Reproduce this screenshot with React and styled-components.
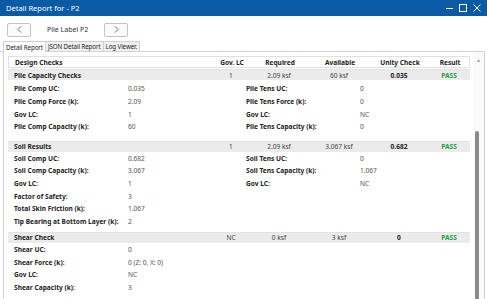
import React from "react";
import styled, { createGlobalStyle } from "styled-components";

const Global = createGlobalStyle`
  html, body { margin: 0; padding: 0; background: #fff; }
  body { font-family: "Noto Sans", "Open Sans", sans-serif; }
  * { box-sizing: border-box; }
`;

const Window = styled.div`
  width: 487px;
  height: 299px;
  overflow: hidden;
  display: flex;
  flex-direction: column;
  background: #fff;
`;

const TitleBar = styled.div`
  height: 16px;
  flex: none;
  background: #0b5aa5;
  color: #fff;
  display: flex;
  align-items: center;
  padding: 0 6px 0 6px;
  font-size: 7.5px;
`;

const Title = styled.div`
  flex: 1;
`;

const Controls = styled.div`
  display: flex;
  align-items: center;
  gap: 6px;
`;

const Toolbar = styled.div`
  height: 24px;
  flex: none;
  display: flex;
  align-items: center;
  padding: 3px 0 0 7px;
`;

const NavButton = styled.button`
  width: 24px;
  height: 14px;
  border: 1px solid #c4c4c4;
  border-radius: 2px;
  background: #fbfbfb;
  padding: 0;
  display: flex;
  align-items: center;
  justify-content: center;
  color: #444;
`;

const PileLabel = styled.div`
  width: 73px;
  padding-left: 16px;
  font-size: 7px;
  color: #333;
`;

const TabStrip = styled.div`
  height: 11px;
  flex: none;
  display: flex;
  align-items: flex-end;
  padding-left: 3px;
  margin-top: 1px;
  border-bottom: 1px solid #d4d4d4;
  margin-right: 2px;
`;

const Tab = styled.div`
  height: ${(p) => (p.$active ? "11px" : "10px")};
  padding: 0 2px;
  display: flex;
  align-items: center;
  font-size: 6.2px;
  letter-spacing: -0.1px;
  color: #222;
  border: 1px solid #d0d0d0;
  border-bottom: none;
  margin-bottom: ${(p) => (p.$active ? "-1px" : "0")};
  background: ${(p) => (p.$active ? "#fff" : "#f0f0f0")};
  margin-left: ${(p) => (p.$active ? "0" : "-1px")};
`;

const Panel = styled.div`
  flex: 1;
  display: flex;
  margin-left: 3px;
  margin-right: 2px;
  border-left: 1px solid #d4d4d4;
  border-right: 1px solid #cfcfcf;
  min-height: 0;
`;

const Content = styled.div`
  flex: 1;
  padding: 4px 0 0 4px;
  overflow: hidden;
`;

const Scrollbar = styled.div`
  width: 11px;
  flex: none;
  position: relative;
  background: #fafafa;
  display: flex;
  flex-direction: column;
  align-items: center;
  padding-top: 5px;
`;

const ScrollArrow = styled.div`
  font-size: 5px;
  color: #a0a0a0;
  line-height: 6px;
`;

const ScrollThumb = styled.div`
  position: absolute;
  left: 2px;
  top: 79px;
  bottom: -4px;
  width: 4px;
  border-radius: 2px;
  background: #8a8a8a;
`;

const COLS = "205px 36px 60px 60px 60px 40px";

const HeaderRow = styled.div`
  display: grid;
  grid-template-columns: ${COLS};
  width: 462px;
  height: 12px;
  align-items: center;
  border: 1px solid #e0e0e0;
  font-size: 6.6px;
  font-weight: 700;
  color: #222;
  margin-bottom: 1px;
`;

const GroupRow = styled.div`
  display: grid;
  grid-template-columns: ${COLS};
  width: 462px;
  height: 11px;
  align-items: center;
  background: #ebebeb;
  border-top: 1px solid #e2e2e2;
  font-size: 6.6px;
  color: #333;
`;

const Cell = styled.div`
  text-align: ${(p) => (p.$left ? "left" : "center")};
  padding-left: ${(p) => (p.$left ? "6px" : "0")};
  font-weight: ${(p) => (p.$bold ? 700 : 400)};
  color: ${(p) => (p.$pass ? "#23a03c" : p.$bold ? "#222" : "#444")};
  white-space: nowrap;
`;

const DetailGrid = styled.div`
  display: grid;
  grid-template-columns: 114px 118px 114px 1fr;
  grid-auto-rows: 12.7px;
  align-items: center;
  width: 462px;
  padding: ${(p) => p.$pt}px 0 ${(p) => p.$pb}px 6px;
  font-size: 6.6px;
`;

const Label = styled.div`
  font-weight: 700;
  color: #222;
  white-space: nowrap;
`;

const Value = styled.div`
  color: #555;
  white-space: nowrap;
`;

const sections = [
  {
    name: "Pile Capacity Checks",
    lc: "1",
    req: "2.09 ksf",
    avail: "60 ksf",
    uc: "0.035",
    pt: 2.5,
    pb: 7.5,
    left: [
      ["Pile Comp UC:", "0.035"],
      ["Pile Comp Force (k):", "2.09"],
      ["Gov LC:", "1"],
      ["Pile Comp Capacity (k):", "60"],
    ],
    right: [
      ["Pile Tens UC:", "0"],
      ["Pile Tens Force (k):", "0"],
      ["Gov LC:", "NC"],
      ["Pile Tens Capacity (k):", "0"],
    ],
  },
  {
    name: "Soil Results",
    lc: "1",
    req: "2.09 ksf",
    avail: "3.067 ksf",
    uc: "0.682",
    pt: 0,
    pb: 3.8,
    left: [
      ["Soil Comp UC:", "0.682"],
      ["Soil Comp Capacity (k):", "3.067"],
      ["Gov LC:", "1"],
      ["Factor of Safety:", "3"],
      ["Total Skin Friction (k):", "1.067"],
      ["Tip Bearing at Bottom Layer (k):", "2"],
    ],
    right: [
      ["Soil Tens UC:", "0"],
      ["Soil Tens Capacity (k):", "1.067"],
      ["Gov LC:", "NC"],
    ],
  },
  {
    name: "Shear Check",
    lc: "NC",
    req: "0 ksf",
    avail: "3 ksf",
    uc: "0",
    pt: 0.6,
    pb: 4,
    left: [
      ["Shear UC:", "0"],
      ["Shear Force (k):", "0 (Z: 0, X: 0)"],
      ["Gov LC:", "NC"],
      ["Shear Capacity (k):", "3"],
    ],
    right: [],
  },
];

function Details({ s }) {
  const n = Math.max(s.left.length, s.right.length);
  const cells = [];
  for (let i = 0; i < n; i++) {
    const l = s.left[i];
    const r = s.right[i];
    cells.push(
      <React.Fragment key={i}>
        <Label>{l ? l[0] : ""}</Label>
        <Value>{l ? l[1] : ""}</Value>
        <Label>{r ? r[0] : ""}</Label>
        <Value>{r ? r[1] : ""}</Value>
      </React.Fragment>
    );
  }
  return (
    <DetailGrid $pt={s.pt} $pb={s.pb}>
      {cells}
    </DetailGrid>
  );
}

export default function App() {
  return (
    <>
      <Global />
      <Window>
        <TitleBar>
          <Title>Detail Report for - P2</Title>
          <Controls>
            <svg width="7" height="8" viewBox="0 0 7 8">
              <line x1="0" y1="4.5" x2="7" y2="4.5" stroke="#fff" strokeWidth="1" />
            </svg>
            <svg width="8" height="8" viewBox="0 0 8 8">
              <rect x="0.5" y="0.5" width="7" height="7" fill="none" stroke="#fff" strokeWidth="1" />
            </svg>
            <svg width="8" height="8" viewBox="0 0 8 8">
              <path d="M0.5 0.5 L7.5 7.5 M7.5 0.5 L0.5 7.5" stroke="#fff" strokeWidth="1" />
            </svg>
          </Controls>
        </TitleBar>
        <Toolbar>
          <NavButton>
            <svg width="5" height="7" viewBox="0 0 5 7">
              <path d="M4 0.5 L1 3.5 L4 6.5" fill="none" stroke="#444" strokeWidth="0.8" />
            </svg>
          </NavButton>
          <PileLabel>Pile Label P2</PileLabel>
          <NavButton>
            <svg width="5" height="7" viewBox="0 0 5 7">
              <path d="M1 0.5 L4 3.5 L1 6.5" fill="none" stroke="#444" strokeWidth="0.8" />
            </svg>
          </NavButton>
        </Toolbar>
        <TabStrip>
          <Tab $active>Detail Report</Tab>
          <Tab>JSON Detail Report</Tab>
          <Tab>Log Viewer.</Tab>
        </TabStrip>
        <Panel>
          <Content>
            <HeaderRow>
              <Cell $left $bold>Design Checks</Cell>
              <Cell $bold>Gov. LC</Cell>
              <Cell $bold>Required</Cell>
              <Cell $bold>Available</Cell>
              <Cell $bold>Unity Check</Cell>
              <Cell $bold>Result</Cell>
            </HeaderRow>
            {sections.map((s) => (
              <React.Fragment key={s.name}>
                <GroupRow>
                  <Cell $left $bold>{s.name}</Cell>
                  <Cell>{s.lc}</Cell>
                  <Cell>{s.req}</Cell>
                  <Cell>{s.avail}</Cell>
                  <Cell $bold>{s.uc}</Cell>
                  <Cell $bold $pass>PASS</Cell>
                </GroupRow>
                <Details s={s} />
              </React.Fragment>
            ))}
          </Content>
          <Scrollbar>
            <ScrollArrow>▲</ScrollArrow>
            <ScrollThumb />
          </Scrollbar>
        </Panel>
      </Window>
    </>
  );
}
